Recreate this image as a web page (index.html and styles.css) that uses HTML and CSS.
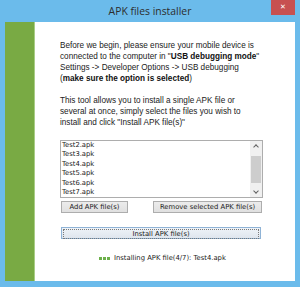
FILE: index.html
```html
<!DOCTYPE html>
<html>
<head>
<meta name="viewport" content="width=device-width, initial-scale=1">
<title>APK files installer</title>
<link rel="stylesheet" href="styles.css">
</head>
<body>

<div class="window">
    <div class="titlebar">
        <span></span>
        <span class="title">APK files installer</span>
        <button class="close" title="Close">&#x2715;</button>
    </div>

    <div class="client">
        <div class="side"></div>

        <div class="content">
            <p class="intro">
                Before we begin, please ensure your mobile device is<br>
                connected to the computer in "<b>USB debugging mode</b>"<br>
                Settings -&gt; Developer Options -&gt; USB debugging<br>
                (<b>make sure the option is selected</b>)
            </p>
            <p class="intro">
                This tool allows you to install a single APK file or<br>
                several at once, simply select the files you wish to<br>
                install and click "Install APK file(s)"
            </p>

            <!-- File list -->
            <div class="listbox">
                <ul class="files">
                    <li>Test2.apk</li>
                    <li>Test3.apk</li>
                    <li>Test4.apk</li>
                    <li>Test5.apk</li>
                    <li>Test6.apk</li>
                    <li>Test7.apk</li>
                </ul>
                <div class="scrollbar">
                    <span class="arrow up"></span>
                    <span class="thumb"></span>
                    <span class="arrow down"></span>
                </div>
            </div>

            <div class="row">
                <button class="btn add">Add APK file(s)</button>
                <button class="btn remove">Remove selected APK file(s)</button>
            </div>

            <button class="btn install"><span class="focus">Install APK file(s)</span></button>

            <div class="status">
                <span class="dots"><i></i><i></i><i></i></span>
                <span>Installing APK file(4/7): Test4.apk</span>
            </div>
        </div>
    </div>
</div>

</body>
</html>
```

FILE: styles.css
```css
html, body {
    margin: 0;
    padding: 0;
}

body {
    width: 300px;
    height: 287px;
    overflow: hidden;
    background-color: #6bbbeb;
}

/* Window frame */
.window {
    box-sizing: border-box;
    width: 300px;
    height: 287px;
    background-color: #6bbbeb;
    padding: 0 5px 6px 5px;
    display: flex;
    flex-direction: column;
}

.titlebar {
    height: 22px;
    display: grid;
    grid-template-columns: 1fr auto 1fr;
    align-items: start;
}

.title {
    font-family: "Open Sans", "Liberation Sans", sans-serif;
    font-size: 10.4px;
    color: #2d2d2d;
    line-height: 23px;
    white-space: nowrap;
}

.close {
    justify-self: end;
    width: 24px;
    height: 15px;
    margin: 0;
    padding: 0;
    border: none;
    background-color: #c75050;
    color: #ffffff;
    font-family: "DejaVu Sans", sans-serif;
    font-size: 7px;
    font-weight: bold;
    line-height: 15px;
    text-align: center;
}

/* Client area */
.client {
    flex: 1;
    display: flex;
    background-color: #ffffff;
}

.side {
    width: 29px;
    background-color: #79aa44;
    border-right: 1px solid #a9cd86;
}

.content {
    flex: 1;
    padding: 18px 0 0 25px;
    font-family: "Liberation Sans", Arial, sans-serif;
    color: #222222;
}

.intro {
    margin: 0 0 11px 0;
    font-size: 8.2px;
    line-height: 11px;
    white-space: nowrap;
}

.intro b {
    color: #111111;
}

/* List box */
.listbox {
    box-sizing: border-box;
    width: 203px;
    height: 58px;
    margin-top: 12px;
    border: 1px solid #adadad;
    display: flex;
    overflow: hidden;
}

.files {
    flex: 1;
    list-style: none;
    margin: 0;
    padding: 0 0 0 1px;
    font-family: "DejaVu Sans", sans-serif;
    font-size: 6.8px;
    line-height: 9.4px;
    color: #1a1a1a;
}

.scrollbar {
    width: 12px;
    background-color: #f0f0f0;
    display: flex;
    flex-direction: column;
    align-items: center;
}

.arrow {
    height: 11px;
    width: 12px;
    display: flex;
    align-items: center;
    justify-content: center;
}

.arrow::before {
    content: "";
    width: 3px;
    height: 3px;
    border-left: 1px solid #606060;
    border-top: 1px solid #606060;
}

.arrow.up::before {
    transform: translateY(1px) rotate(45deg);
}

.arrow.down::before {
    transform: translateY(-1px) rotate(225deg);
}

.thumb {
    width: 10px;
    height: 27px;
    background-color: #cdcdcd;
    margin: 4px 0;
    flex: none;
}

.arrow.down {
    margin-top: auto;
}

/* Buttons */
.btn {
    box-sizing: border-box;
    height: 12px;
    margin: 0;
    padding: 0;
    border: 1px solid #adadad;
    background: linear-gradient(#ececec, #e0e0e0);
    font-family: "DejaVu Sans", sans-serif;
    font-size: 6.8px;
    line-height: 10px;
    color: #1a1a1a;
    white-space: nowrap;
}

.row {
    width: 201px;
    margin: 3px 0 0 1px;
    display: flex;
    justify-content: space-between;
}

.add {
    width: 67px;
}

.remove {
    width: 109px;
}

.install {
    display: block;
    width: 200px;
    margin: 14px 0 0 1px;
    padding: 1px;
    border-color: #8fb3d6;
    background: linear-gradient(#eef3f8, #dfe6ee);
}

.install .focus {
    display: block;
    height: 8px;
    line-height: 8px;
    border: 1px dotted #7a7a7a;
}

/* Progress line */
.status {
    margin-top: 14px;
    padding-left: 39px;
    display: flex;
    align-items: center;
    gap: 4px;
    font-family: "DejaVu Sans", sans-serif;
    font-size: 6.8px;
    line-height: 10px;
    color: #1a1a1a;
}

.dots {
    display: flex;
    gap: 1px;
}

.dots i {
    width: 3px;
    height: 3px;
    background-color: #6cb04a;
}
```
